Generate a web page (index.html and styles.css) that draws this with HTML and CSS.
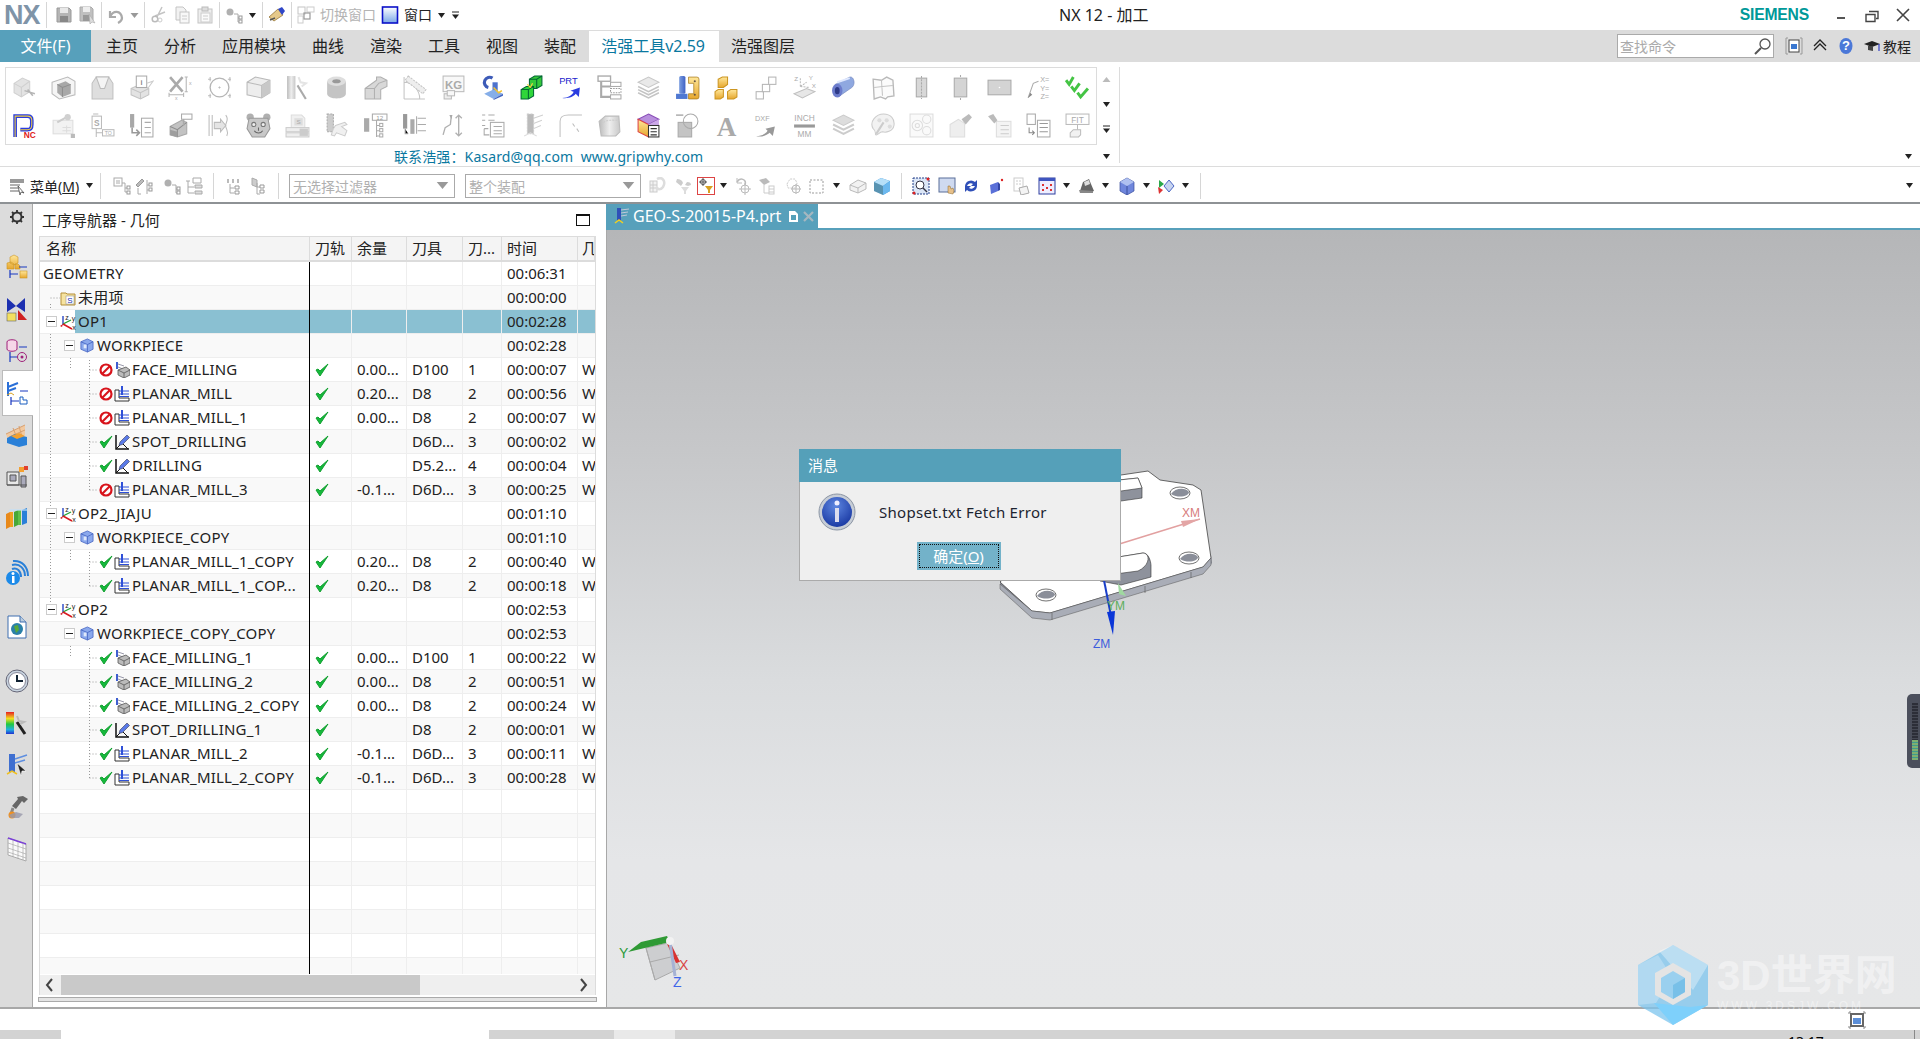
FILE: index.html
```html
<!DOCTYPE html>
<html lang="zh">
<head>
<meta charset="utf-8">
<title>NX 12 - 加工</title>
<link rel="stylesheet" href="styles.css">
</head>
<body>
<svg class="defs" xmlns="http://www.w3.org/2000/svg">
<defs>
<linearGradient id="gb" x1="0" y1="0" x2="1" y2="0"><stop offset="0" stop-color="#7d9fe0"/><stop offset="1" stop-color="#3f61c4"/></linearGradient>
<linearGradient id="gy" x1="0" y1="0" x2="0" y2="1"><stop offset="0" stop-color="#ffe79a"/><stop offset="1" stop-color="#e6a72e"/></linearGradient>
<linearGradient id="gr" x1="0" y1="0" x2="1" y2="0"><stop offset="0" stop-color="#bbb"/><stop offset=".5" stop-color="#eee"/><stop offset="1" stop-color="#c8c8c8"/></linearGradient>
<radialGradient id="gi" cx=".45" cy=".3" r=".8"><stop offset="0" stop-color="#5d86e0"/><stop offset="1" stop-color="#12309c"/></radialGradient>
<linearGradient id="gh" x1="0" y1="0" x2="0" y2="1"><stop offset="0" stop-color="#fff"/><stop offset="1" stop-color="#7aa7e8"/></linearGradient>
<linearGradient id="sp" x1="0" y1="0" x2="0" y2="1"><stop offset="0" stop-color="#e82020"/><stop offset=".3" stop-color="#f0e020"/><stop offset=".55" stop-color="#20c840"/><stop offset=".8" stop-color="#20b0e0"/><stop offset="1" stop-color="#2030d0"/></linearGradient>
</defs>

<symbol id="a1" viewBox="0 0 24 24"><path d="M2 8l8-5 7 3v10l-8 5-7-4z" fill="#e3e3e3" stroke="#d0d0d0"/><path d="M2 8l7 4 8-6M9 12v9" fill="none" stroke="#d0d0d0"/><path d="M12 15l10 3M15 14l5 6" stroke="#b5b5b5" stroke-width="1.5"/></symbol>
<symbol id="a2" viewBox="0 0 24 24"><path d="M1 7l15-5 7 4v13L8 23l-7-5z" fill="#f5f5f5" stroke="#bbb"/><path d="M6 9l8-3 5 3v9l-8 3-5-4z" fill="#a8a8a8"/><path d="M6 9l5 3 8-3M11 12v9" fill="none" stroke="#8e8e8e"/></symbol>
<symbol id="a3" viewBox="0 0 24 24"><path d="M2 8l4-6h12l4 6v15H2z" fill="#dedede" stroke="#c0c0c0"/><path d="M6 2l4 11h4l4-11z" fill="#f4f4f4" stroke="#bbb"/></symbol>
<symbol id="a4" viewBox="0 0 24 24"><path d="M2 13l9-4 8 4v6l-8 4-9-4z" fill="#e3e3e3" stroke="#c4c4c4"/><path d="M2 13l9 4 8-4M11 17v6" fill="none" stroke="#c4c4c4"/><rect x="7" y="1" width="10" height="11" fill="#fff" stroke="#aaa"/><text x="12" y="10" class="st b" fill="#888">i</text><path d="M17 8l6-2-5 7" fill="none" stroke="#ccc"/></symbol>
<symbol id="a5" viewBox="0 0 24 24"><path d="M2 2l12 14M14 2L2 16" stroke="#aaa" stroke-width="2.500"/><path d="M1 19h14M16 2h3M16 16h3M17.500 2v14M1 17v4M15 17v4" stroke="#b5b5b5"/><text x="21.500" y="10" class="st s5" fill="#aaa">x</text><text x="8" y="24" class="st s5" fill="#aaa">x</text></symbol>
<symbol id="a6" viewBox="0 0 24 24"><circle cx="12" cy="12" r="9" fill="#fff" stroke="#b5b5b5" stroke-width="1.3"/><path d="M12 11v2M11 12h2M1 4h3M3 2v4M20 4h3M22 2v4M1 20h3M3 18v4M20 20h3M22 18v4" stroke="#bbb"/></symbol>
<symbol id="a7" viewBox="0 0 24 24"><path d="M1 7l8-5 14 3v12l-8 5L1 19z" fill="#ededed" stroke="#b9b9b9"/><path d="M1 7l14 3 8-5M15 10v12" fill="none" stroke="#b9b9b9"/><path d="M15 10l8-5v12l-8 5z" fill="#c8c8c8"/></symbol>
<symbol id="a8" viewBox="0 0 24 24"><rect x="2" y="1" width="8" height="22" fill="url(#gr)"/><path d="M12 10l8 13" stroke="#aaa" stroke-width="2"/><path d="M13 2l2 5 5 1-4 3" fill="none" stroke="#e4e4e4" stroke-width="2"/></symbol>
<symbol id="a9" viewBox="0 0 24 24"><path d="M3 6v12c0 6 18 6 18 0V6" fill="#c4c4c4"/><ellipse cx="12" cy="6" rx="9" ry="4.5" fill="#dedede"/><ellipse cx="12" cy="6" rx="4" ry="2" fill="#999"/></symbol>
<symbol id="a10" viewBox="0 0 24 24"><path d="M2 13L13 5V2h4l6 3v6l-6 3v9H2z" fill="#d8d8d8" stroke="#b0b0b0"/><path d="M2 13h9l4-5 8-3M11 13v10" fill="none" stroke="#b0b0b0"/></symbol>
<symbol id="a11" viewBox="0 0 24 24"><path d="M2 23h20M2 2v21M2 7c8 0 15 7 15 16" fill="none" stroke="#c4c4c4"/><path d="M6 1l17 13-3 4L3 5z" fill="#eee" stroke="#c4c4c4" stroke-dasharray="2 1"/></symbol>
<symbol id="a12" viewBox="0 0 24 24"><rect x="2" y="1" width="20" height="15" fill="#f8f8f8" stroke="#bbb"/><text x="12" y="13" class="st b s12" fill="#aaa">KG</text><rect x="3" y="18" width="7" height="5" fill="#eee" stroke="#bbb"/><rect x="6" y="15" width="7" height="5" fill="#f8f8f8" stroke="#bbb"/></symbol>
<symbol id="a13" viewBox="0 0 24 24"><path d="M12 3a5 5 0 1 0-4 9" fill="none" stroke="#3d5bb8" stroke-width="3"/><rect x="12" y="7" width="5" height="10" fill="#4d72cc"/><path d="M4 18l9-4 9 4-9 5z" fill="#86aee8"/><path d="M13 23l9-5v2l-9 4z" fill="#3f62bf"/><path d="M13 12l5 5 3-2" fill="none" stroke="#f4c430" stroke-width="1.5"/></symbol>
<symbol id="a14" viewBox="0 0 24 24"><path d="M10 4l5-3h7v9l-5 3h-7z" fill="#34c83a" stroke="#063"/><path d="M2 14l5-3h7v9l-5 3H2z" fill="#2fd63a" stroke="#063"/><path d="M9 14v9M2 14h7l5-3M17 4v9M10 4h7l5-3" fill="none" stroke="#063"/><path d="M8 9l3 3M13 8l-2 4" stroke="#f4d03f" stroke-width="1.2"/></symbol>
<symbol id="a15" viewBox="0 0 24 24"><text x="10" y="9" class="st s9 n" fill="#2222cc">PRT</text><path d="M4 22c6 0 10-3 11-6l-3-1 9-3-1 9-3-3c-2 3-8 5-13 4z" fill="#2a3ce0"/></symbol>
<symbol id="a16" viewBox="0 0 24 24"><rect x="1" y="1" width="12" height="5" fill="#fff" stroke="#aaa" stroke-width="1.3"/><path d="M4 6v16M4 11h9M4 21h9" stroke="#aaa" stroke-width="2"/><rect x="13" y="7" width="10" height="4" fill="#fff" stroke="#aaa"/><rect x="13" y="13" width="10" height="4" fill="#fff" stroke="#999" stroke-dasharray="1.5 1"/><rect x="13" y="19" width="10" height="4" fill="#fff" stroke="#aaa"/></symbol>
<symbol id="a17" viewBox="0 0 24 24"><path d="M2 7l10-5 10 5-10 5z" fill="#e9e9e9" stroke="#c8c8c8"/><path d="M2 11l10 5 10-5M2 14l10 5 10-5M2 17l10 5 10-5" fill="none" stroke="#c4c4c4" stroke-width="1.5"/></symbol>
<symbol id="a18" viewBox="0 0 24 24"><rect x="4" y="1" width="6" height="17" rx="1.5" fill="url(#gb)"/><path d="M1 18h11v5H1z" fill="#4f78d2"/><path d="M13 2h8a2 2 0 0 1 2 2v17a2 2 0 0 1-2 2h-8v-5h5V8h-5z" fill="url(#gy)" stroke="#a5781a" stroke-width=".7"/><circle cx="19" cy="6" r="1" fill="#654"/><circle cx="19" cy="19" r="1" fill="#654"/></symbol>
<symbol id="a19" viewBox="0 0 24 24"><path d="M4 4l4-2h5v7l-4 3H4z" fill="url(#gy)" stroke="#cc9622"/><path d="M1 16l3-2h5v7l-3 2H1zM13 16l3-2h6v7l-3 2h-6z" fill="url(#gy)" stroke="#cc9622"/></symbol>
<symbol id="a20" viewBox="0 0 24 24"><rect x="3" y="16" width="7" height="7" fill="#fff" stroke="#b5b5b5"/><rect x="9" y="9" width="7" height="7" fill="#fff" stroke="#b5b5b5"/><rect x="15" y="2" width="7" height="7" fill="#fff" stroke="#b5b5b5"/></symbol>
<symbol id="a21" viewBox="0 0 24 24"><path d="M2 18l12-5 8 3-12 6z" fill="#e7e7e7" stroke="#c0c0c0"/><path d="M8 3v9M8 11l6-4M8 11l9 1" stroke="#bbb" stroke-dasharray="2 1"/><text x="4" y="6" class="st s6" fill="#aaa">Z</text><text x="18" y="5" class="st s6" fill="#aaa">Y</text><text x="21" y="12" class="st s6" fill="#aaa">X</text></symbol>
<symbol id="a22" viewBox="0 0 24 24"><path d="M4 9L18 2c4-1 6 7 2 10L7 21z" fill="#8fa8e0" stroke="#7788bb" stroke-width=".6"/><ellipse cx="6" cy="15" rx="5" ry="6.5" fill="#6c7ccc"/><ellipse cx="6" cy="15" rx="2.3" ry="3.4" fill="#2e3a88"/><path d="M6 7L18 3" stroke="#dfe8ff" stroke-width="2"/></symbol>
<symbol id="a23" viewBox="0 0 24 24"><path d="M3 4l8 1 5-3 6 3 1 15-6 1-2 2-5-2-6 2z" fill="#fbfbfb" stroke="#b9b9b9" stroke-width="1.3"/><path d="M11 5l1 15M4 12l8-1 10-1" fill="none" stroke="#c4c4c4"/></symbol>
<symbol id="a24" viewBox="0 0 24 24"><rect x="7" y="3" width="10" height="18" fill="#d8d8d8" stroke="#aaa"/><path d="M12 1v22" stroke="#aaa" stroke-dasharray="2 1"/></symbol>
<symbol id="a25" viewBox="0 0 24 24"><rect x="6" y="3" width="12" height="18" fill="#d4d4d4" stroke="#aaa"/><path d="M12 0v2M12 22v2" stroke="#aaa"/></symbol>
<symbol id="a26" viewBox="0 0 24 24"><rect x="1" y="5" width="22" height="14" fill="#d4d4d4" stroke="#aaa"/><circle cx="12" cy="12" r=".8" fill="#fff"/></symbol>
<symbol id="a27" viewBox="0 0 24 24"><path d="M2 22l5-14 5-2" fill="none" stroke="#aaa"/><path d="M2 22l2-5 2 2z" fill="#888"/><text x="18" y="7" class="st s7" fill="#aaa">X=</text><text x="18" y="15" class="st s7" fill="#aaa">Y=</text><text x="18" y="23" class="st s7" fill="#aaa">Z=</text></symbol>
<symbol id="a28" viewBox="0 0 24 24"><path d="M1 5l3 4 4-7M6 11l3 4 5-7M12 17l3 4 7-8" fill="none" stroke="#44c444" stroke-width="2.800"/></symbol>

<symbol id="b1" viewBox="0 0 24 24"><path d="M3 23V3h12c3 0 4 2 4 4v4c0 3-1 5-4 5H8" fill="none" stroke="#2a3ce0" stroke-width="3.500"/><path d="M3 23V3h12c3 0 4 2 4 4v4c0 3-1 5-4 5H8" fill="none" stroke="#f0d040" stroke-width="1"/><text x="17" y="24" class="st b s8" fill="#e02020">NC</text></symbol>
<symbol id="b2" viewBox="0 0 24 24"><rect x="2" y="7" width="19" height="13" fill="#f2f2f2" stroke="#ddd"/><path d="M6 9l9-5" stroke="#ccc" stroke-width="2"/><circle cx="16" cy="4" r="3" fill="#d0d0d0"/><path d="M11 14h8M11 17h8M15 12v7" stroke="#ddd"/><rect x="19" y="20" width="4" height="4" fill="#bbb"/></symbol>
<symbol id="b3" viewBox="0 0 24 24"><rect x="2" y="3" width="9" height="12" fill="#fff" stroke="#bbb"/><text x="6.500" y="12" class="st s8 b" fill="#aaa">S</text><path d="M3 1h5M6 15v8M6 19h6" stroke="#bbb"/><rect x="12" y="16" width="11" height="6" fill="#fff" stroke="#bbb"/><text x="17.500" y="21" class="st s5" fill="#aaa">TO</text></symbol>
<symbol id="b4" viewBox="0 0 24 24"><rect x="1" y="1" width="4" height="13" fill="#a8a8a8"/><path d="M3 14v5h6M7 16l3 3-3 3" fill="none" stroke="#999" stroke-width="1.5"/><rect x="12" y="5" width="11" height="18" fill="#fff" stroke="#aaa"/><path d="M15 9h6M15 14h6M15 19h6" stroke="#aaa"/></symbol>
<symbol id="b5" viewBox="0 0 24 24"><path d="M2 13l11-6 5 2v11l-9 3-7-2z" fill="#c2c2c2" stroke="#a8a8a8"/><path d="M2 13l7 3 9-7M9 16v7" fill="none" stroke="#8d8d8d"/><path d="M2 16l7 2v5l-7-2z" fill="#9e9e9e"/><rect x="13" y="1" width="10" height="5" fill="#fff" stroke="#aaa"/><path d="M15 6v6" stroke="#aaa" stroke-width="1.5"/></symbol>
<symbol id="b6" viewBox="0 0 24 24"><path d="M2 2v20M5 2v20" stroke="#bbb"/><path d="M7 9h6V6l5 6-5 6v-3H7z" fill="#e4e4e4" stroke="#bbb"/><path d="M18 2c4 5-1 7 0 11s3 5 1 9" fill="none" stroke="#bbb"/></symbol>
<symbol id="b7" viewBox="0 0 24 24"><circle cx="4" cy="4" r="3.500" fill="#b0b0b0"/><circle cx="20" cy="4" r="3.500" fill="#b0b0b0"/><path d="M3 5h18l2 10-5 8H6l-5-8z" fill="#c8c8c8" stroke="#999"/><circle cx="7.500" cy="11" r="2" fill="#eee" stroke="#777"/><circle cx="16.500" cy="11" r="2" fill="#eee" stroke="#777"/><path d="M8 17c2 3 6 3 8 0M12 14v3" fill="none" stroke="#666"/></symbol>
<symbol id="b8" viewBox="0 0 24 24"><path d="M6 2h10l3 3v9H6z" fill="#f0f0f0" stroke="#ddd"/><rect x="9" y="5" width="8" height="7" fill="#ddd"/><text x="13" y="11" class="st s6" fill="#aaa">S</text><rect x="1" y="14" width="22" height="4" fill="#eee" stroke="#ccc"/><rect x="1" y="19" width="22" height="4" fill="#eee" stroke="#ccc"/><rect x="14" y="15" width="8" height="7" fill="#ccc"/></symbol>
<symbol id="b9" viewBox="0 0 24 24"><rect x="3" y="1" width="6" height="17" fill="#ccc" stroke="#aaa" stroke-dasharray="2 1"/><path d="M11 12l9-3 2 2-5 2 5 4-2 5-8-3-2 3-3-1 2-6z" fill="#f0f0f0" stroke="#ccc"/></symbol>
<symbol id="b10" viewBox="0 0 24 24"><rect x="1" y="5" width="5" height="13" fill="#aaa"/><rect x="9" y="1" width="14" height="6" fill="#fff" stroke="#aaa"/><text x="16" y="6.500" class="st s6" fill="#999">12</text><path d="M13 7v16M13 12h3M13 17h3M13 22h3" stroke="#aaa"/><rect x="16" y="10" width="3" height="3" fill="#fff" stroke="#aaa"/><rect x="16" y="15" width="3" height="3" fill="#fff" stroke="#aaa"/><rect x="16" y="20" width="3" height="3" fill="#fff" stroke="#aaa"/></symbol>
<symbol id="b11" viewBox="0 0 24 24"><rect x="1" y="1" width="4" height="14" fill="#999"/><rect x="8" y="6" width="4" height="14" fill="#aaa"/><path d="M3 15v5h3M15 5h8M15 11h8M15 17h8M14 3v17" stroke="#aaa"/></symbol>
<symbol id="b12" viewBox="0 0 24 24"><path d="M17 2v20M14 5l3-3 3 3M14 19l3 3 3-3M10 2l-1 9-5 3-2 7" fill="none" stroke="#b0b0b0" stroke-width="1.3"/><path d="M8 2l3 0-1 4z" fill="#aaa"/></symbol>
<symbol id="b13" viewBox="0 0 24 24"><path d="M2 2h3M2 7h3M2 12h3M8 2h6M8 7h6" stroke="#aaa"/><path d="M4 15h4M4 15v6h5" fill="none" stroke="#aaa"/><rect x="10" y="9" width="13" height="14" fill="#fff" stroke="#aaa"/><path d="M13 13h8M13 17h8M13 20h8" stroke="#aaa"/></symbol>
<symbol id="b14" viewBox="0 0 24 24"><path d="M8 1h6v19H8z" fill="#bbb" stroke="#ccc" stroke-dasharray="2 1"/><path d="M14 5l9-3M14 10l8-3M14 15l7-3" stroke="#d0d0d0"/><path d="M5 22l6-3 6 3" fill="none" stroke="#ddd"/></symbol>
<symbol id="b15" viewBox="0 0 24 24"><path d="M2 23V8c0-5 3-6 8-6h13" fill="none" stroke="#c0c0c0"/><path d="M14 10l2 3M18 15l2 3" stroke="#bbb"/></symbol>
<symbol id="b16" viewBox="0 0 24 24"><path d="M2 8l6-5h13l1 15-4 4H4z" fill="url(#gr)" stroke="#bbb"/><path d="M6 9c5-3 10-2 15-2" fill="none" stroke="#ccc" stroke-dasharray="2 1"/></symbol>
<symbol id="b17" viewBox="0 0 24 24"><path d="M12 1l10 5-10 5L2 6z" fill="#b88fdd" stroke="#8a4fb8"/><path d="M2 6l10 5v12L2 18z" fill="url(#gy)" stroke="#d44"/><path d="M12 11l10-5v6h-10z" fill="#cba8e8"/><rect x="12" y="12" width="10" height="11" fill="#fff" stroke="#333"/><path d="M14 15h6M14 18h6M14 21h6" stroke="#333"/></symbol>
<symbol id="b18" viewBox="0 0 24 24"><rect x="3" y="9" width="13" height="14" fill="#c4c4c4" stroke="#aaa"/><circle cx="15" cy="8" r="7" fill="none" stroke="#aaa"/><path d="M1 2h7" stroke="#888"/></symbol>
<symbol id="b19" viewBox="0 0 24 24"><text x="12" y="22" class="st sa" fill="#aaa">A</text></symbol>
<symbol id="b20" viewBox="0 0 24 24"><text x="9" y="8" class="st s7" fill="#aaa">DXF</text><path d="M3 22c6 0 9-2 11-5l-2-2 9-2-2 9-3-3c-2 2-8 5-13 3z" fill="#999"/></symbol>
<symbol id="b21" viewBox="0 0 24 24"><text x="12" y="8" class="st s8" fill="#aaa">INCH</text><path d="M2 11h20v3H2z" fill="#999"/><text x="12" y="23" class="st s8" fill="#aaa">MM</text></symbol>
<symbol id="b22" viewBox="0 0 24 24"><path d="M2 7l10-5 10 5-10 5z" fill="#ddd" stroke="#ccc"/><path d="M2 11l10 5 10-5M2 15l10 5 10-5" fill="none" stroke="#ccc" stroke-width="2"/></symbol>
<symbol id="b23" viewBox="0 0 24 24"><path d="M3 15C-1 8 6 1 13 1c7 0 11 5 10 11-1 6-8 7-11 6-3 0-4 3-6 3s1-3-3-6z" fill="#f2f2f2" stroke="#ccc"/><circle cx="9" cy="7" r="2" fill="#ddd"/><circle cx="16" cy="7" r="2" fill="#ddd"/><circle cx="19" cy="13" r="2" fill="#ddd"/><path d="M6 20l7-11" stroke="#ccc" stroke-width="2"/></symbol>
<symbol id="b24" viewBox="0 0 24 24"><rect x="1" y="1" width="22" height="22" fill="#fafafa" stroke="#ddd"/><circle cx="8" cy="12" r="5" fill="none" stroke="#ddd"/><circle cx="8" cy="12" r="2" fill="none" stroke="#ddd"/><circle cx="17" cy="6" r="4" fill="none" stroke="#ddd"/><circle cx="17" cy="17" r="4" fill="none" stroke="#ddd"/></symbol>
<symbol id="b25" viewBox="0 0 24 24"><path d="M2 11l8-5 6 4v13H2z" fill="#eee" stroke="#ddd"/><path d="M13 6l7-5 3 3-6 7z" fill="#bbb"/></symbol>
<symbol id="b26" viewBox="0 0 24 24"><rect x="9" y="8" width="14" height="15" fill="#f4f4f4" stroke="#ddd"/><path d="M13 12h8M13 16h8M13 20h8" stroke="#ccc"/><path d="M1 3l5-2 4 6-3 3z" fill="#bbb"/></symbol>
<symbol id="b27" viewBox="0 0 24 24"><rect x="1" y="1" width="8" height="10" fill="#fff" stroke="#aaa"/><path d="M3 14v5h5M6 17l2 2-2 2" fill="none" stroke="#888"/><rect x="11" y="7" width="12" height="16" fill="#fff" stroke="#aaa"/><path d="M13 10h8M13 14h8M13 18h8" stroke="#999"/></symbol>
<symbol id="b28" viewBox="0 0 24 24"><rect x="1" y="1" width="22" height="10" fill="#fff" stroke="#bbb"/><text x="12" y="9.500" class="st s8" fill="#aaa">FIT</text><path d="M12 11v5" stroke="#bbb"/><path d="M5 19l3-3h7v5l-2 2H5z" fill="#f2f2f2" stroke="#bbb"/></symbol>

<symbol id="caret" viewBox="0 0 9 9"><path d="M1 2h7L4.500 7z" fill="#222"/></symbol>
<symbol id="carets" viewBox="0 0 9 9"><path d="M1 1h7" stroke="#222"/><path d="M1 3.500h7L4.500 8z" fill="#222"/></symbol>
<symbol id="caretg" viewBox="0 0 9 9"><path d="M.5 2h8L4.500 7z" fill="#999"/></symbol>
<symbol id="up" viewBox="0 0 9 9"><path d="M.5 7h8L4.500 2z" fill="#bbb"/></symbol>

<symbol id="q1" viewBox="0 0 18 18"><path d="M2 2h12l2 2v12H2z" fill="#b5b5b5" stroke="#999"/><rect x="5" y="2" width="8" height="5" fill="#e8e8e8"/><rect x="5" y="10" width="8" height="6" fill="#888"/></symbol>
<symbol id="q2" viewBox="0 0 18 18"><path d="M2 1h11l2 2v12H2z" fill="#c0c0c0" stroke="#aaa"/><rect x="5" y="1" width="7" height="5" fill="#eee"/><rect x="5" y="9" width="7" height="6" fill="#999"/><path d="M11 8l6 9-3-1-2 2z" fill="#ddd" stroke="#aaa" stroke-width=".6"/></symbol>
<symbol id="q3" viewBox="0 0 18 18"><path d="M3 5v6h6M3 11c3-7 11-7 12 1 0 3-2 4-4 5" fill="none" stroke="#aaa" stroke-width="2.2"/></symbol>
<symbol id="q4" viewBox="0 0 18 18"><path d="M12 1L7 11M15 6L5 10" stroke="#c4c4c4" stroke-width="1.5"/><circle cx="5" cy="13" r="2.800" fill="none" stroke="#bbb" stroke-width="1.500"/><circle cx="10" cy="14" r="2" fill="none" stroke="#ccc"/></symbol>
<symbol id="q5" viewBox="0 0 18 18"><path d="M3 1h7l3 3v10H3z" fill="#f2f2f2" stroke="#c4c4c4"/><rect x="7" y="6" width="9" height="11" fill="#f8f8f8" stroke="#c4c4c4"/><path d="M9 10h5M9 13h5" stroke="#ccc"/></symbol>
<symbol id="q6" viewBox="0 0 18 18"><rect x="2" y="3" width="14" height="14" fill="#eee" stroke="#c4c4c4"/><rect x="6" y="1" width="6" height="4" fill="#ddd" stroke="#bbb"/><rect x="5" y="7" width="9" height="9" fill="#fafafa" stroke="#ccc"/><path d="M7 10h5M7 13h5" stroke="#ccc"/></symbol>
<symbol id="q7" viewBox="0 0 18 18"><circle cx="5" cy="6" r="3.500" fill="#b0b0b0"/><path d="M9 8h4v8h3M13 12h3" fill="none" stroke="#aaa"/><rect x="14" y="10" width="3" height="3" fill="#fff" stroke="#999"/><rect x="14" y="14" width="3" height="3" fill="#fff" stroke="#999"/></symbol>
<symbol id="q8" viewBox="0 0 18 18"><path d="M1 11l9-8 5 6-9 6z" fill="#e6c98a" stroke="#8c6a2a" stroke-width=".7"/><path d="M10 3l4-2 3 4-3 4z" fill="#2f46c8"/><path d="M2 14l5-2" stroke="#555" stroke-width="1.500"/></symbol>
<symbol id="q9" viewBox="0 0 18 18"><rect x="1" y="1" width="7" height="7" fill="#fff" stroke="#c4c4c4"/><rect x="10" y="1" width="7" height="5" fill="#fff" stroke="#ccc"/><rect x="1" y="10" width="5" height="7" fill="#fff" stroke="#ccc"/><rect x="7" y="7" width="6" height="6" fill="none" stroke="#999" stroke-width="1.200"/></symbol>
<symbol id="q10" viewBox="0 0 18 18"><rect x="1.500" y="1" width="15" height="16" fill="url(#gh)" stroke="#0a10c8" stroke-width="1.600"/></symbol>

<symbol id="t1" viewBox="0 0 18 18"><rect x="2" y="2" width="14" height="4" fill="#9a9a9a"/><path d="M2 8h10M2 11h8M2 14h10" stroke="#666"/><path d="M10 9l6 7-3-1-1 3z" fill="#fff" stroke="#333" stroke-width=".7"/></symbol>
<symbol id="t2" viewBox="0 0 18 18"><rect x="1" y="1" width="8" height="8" fill="#fff" stroke="#aaa"/><path d="M3 4h4M3 6h4M9 6h3v9h2M12 11h2" fill="none" stroke="#aaa"/><rect x="14" y="9" width="3" height="3" fill="#fff" stroke="#999"/><rect x="14" y="14" width="3" height="3" fill="#fff" stroke="#999"/></symbol>
<symbol id="t3" viewBox="0 0 18 18"><path d="M1 8l6-6 2 2-6 6z" fill="#bbb" stroke="#999"/><path d="M3 11v6h3M12 3v14M12 8h3M12 13h3" fill="none" stroke="#aaa"/><rect x="14" y="6" width="3" height="3" fill="#fff" stroke="#999"/><rect x="14" y="11" width="3" height="3" fill="#fff" stroke="#999"/></symbol>
<symbol id="t4" viewBox="0 0 18 18"><path d="M8 1h8v5H8z" fill="none" stroke="#aaa"/><path d="M1 4h4M3 4v12h6M3 10h6" fill="none" stroke="#aaa"/><path d="M10 8h7v3h-7zM10 14h7v3h-7z" fill="#ddd" stroke="#aaa"/></symbol>
<symbol id="t5" viewBox="0 0 18 18"><path d="M1 2v4h2V2zM6 2v4h2V2zM11 2v4h2V2z" fill="#bbb"/><path d="M4 7v9h4M4 11h4" fill="none" stroke="#aaa"/><path d="M9 9h4v3H9zM9 14h4v3H9z" fill="#fff" stroke="#999"/></symbol>
<symbol id="t6" viewBox="0 0 18 18"><path d="M4 1l5 2v7l-5-2z" fill="#ccc" stroke="#aaa"/><path d="M9 6v11h3M9 10h3" fill="none" stroke="#aaa"/><path d="M12 8h4v3h-4zM12 13h4v3h-4z" fill="#fff" stroke="#999"/></symbol>
<symbol id="t7" viewBox="0 0 18 18"><rect x="1" y="4" width="7" height="11" fill="#f2f2f2" stroke="#ccc"/><path d="M1 8h7M1 11h7M4 4v11" stroke="#ccc"/><path d="M8 2c6-3 9 3 6 8-2 3-6 3-6 0" fill="none" stroke="#ddd" stroke-width="2.500"/></symbol>
<symbol id="t8" viewBox="0 0 18 18"><path d="M2 2c3 0 5 1 6 4l-2 3-5-4zM12 5c3 0 4 1 4 3l-3 1-3-1z" fill="#ccc"/><path d="M6 10h8l-3 4v3H9v-3z" fill="#ddd"/></symbol>
<symbol id="t9" viewBox="0 0 18 18"><rect x=".5" y=".5" width="17" height="17" fill="#fff" stroke="#d44"/><path d="M6 1v8M2 5h8" stroke="#555"/><circle cx="6" cy="5" r="2.500" fill="none" stroke="#555"/><path d="M8 9h8l-3 4v3h-2v-3z" fill="#d8a020"/></symbol>
<symbol id="t10" viewBox="0 0 18 18"><path d="M3 5c3-5 10-3 8 3" fill="none" stroke="#bbb" stroke-width="1.500"/><path d="M3 1v5h5" fill="none" stroke="#bbb"/><circle cx="11" cy="12" r="4" fill="none" stroke="#bbb"/><path d="M11 6v12M5 12h12" stroke="#bbb"/></symbol>
<symbol id="t11" viewBox="0 0 18 18"><path d="M1 3l7-2 4 4-6 3z" fill="#bbb"/><rect x="11" y="9" width="5" height="8" fill="#fff" stroke="#ccc"/><path d="M11 12h5M11 15h5M6 8v8h5" fill="none" stroke="#ccc"/></symbol>
<symbol id="t12" viewBox="0 0 18 18"><path d="M3 7l3-5h5l2 4-1 5H4z" fill="none" stroke="#ccc" stroke-dasharray="2 1"/><circle cx="12" cy="12" r="4" fill="none" stroke="#bbb"/><path d="M12 7v10M7 12h10" stroke="#bbb"/></symbol>
<symbol id="t13" viewBox="0 0 18 18"><rect x="2" y="3" width="13" height="13" fill="none" stroke="#999" stroke-dasharray="2 1.500"/></symbol>
<symbol id="t14" viewBox="0 0 18 18"><path d="M1 8l8-5 8 3v6l-8 4-8-3z" fill="#f2f2f2" stroke="#bbb"/><path d="M1 8l8 3 8-5M9 11v5" fill="none" stroke="#bbb"/></symbol>
<symbol id="t15" viewBox="0 0 18 18"><path d="M1 5l7-4 9 3v10l-7 4-9-4z" fill="#2e8fd8"/><path d="M1 5l9 4 7-5-9-3z" fill="#b6dff8"/><path d="M10 9v9l7-4V4z" fill="#6cb8ee"/><path d="M1 5v9l9 4V9z" fill="#d8a040" opacity=".25"/></symbol>
<symbol id="t16" viewBox="0 0 18 18"><rect x="1" y="1" width="16" height="16" fill="#dbe6f7" stroke="#223f88" stroke-dasharray="2 1"/><circle cx="8" cy="8" r="4" fill="#fff" stroke="#334"/><path d="M11 11l4 4" stroke="#334" stroke-width="1.500"/><circle cx="2" cy="16" r="1.500" fill="#d22"/><circle cx="16" cy="2" r="1.500" fill="#d22"/></symbol>
<symbol id="t17" viewBox="0 0 18 18"><rect x="1" y="1" width="16" height="14" fill="#cfdaf0" stroke="#5a6f99"/><path d="M10 16V9l2 0 1 3 2-1 1 3-1 3z" fill="#e7c08a" stroke="#8c6a2a" stroke-width=".5"/></symbol>
<symbol id="t18" viewBox="0 0 18 18"><path d="M3 9a6 6 0 0 1 10-4l2-2v6h-6l2-2a4 4 0 0 0-6 2M15 9a6 6 0 0 1-10 4l-2 2V9h6l-2 2a4 4 0 0 0 6-2" fill="#2f4fb8"/></symbol>
<symbol id="t19" viewBox="0 0 18 18"><path d="M2 8l8-3v9l-7 3z" fill="#5a70d8"/><path d="M10 5l2 2v6l-2 1z" fill="#3245a5"/><circle cx="14" cy="3" r="1.200" fill="#d22"/></symbol>
<symbol id="t20" viewBox="0 0 18 18"><rect x="2" y="1" width="9" height="13" fill="#fff" stroke="#ccc"/><path d="M4 4h2M7 4h2M4 7h2M7 7h2" stroke="#ccc"/><path d="M7 11l8-2 2 7-8 2z" fill="#f4f4f4" stroke="#aaa"/></symbol>
<symbol id="t21" viewBox="0 0 18 18"><rect x="1" y="1" width="16" height="16" fill="#eef" stroke="#2f3f9f"/><rect x="1" y="1" width="16" height="3" fill="#3f55bf"/><path d="M4 7h2v2H4zM12 7h2v2h-2zM4 12h2v2H4zM12 12h2v2h-2z" fill="#d33"/><path d="M8 10h2v2H8z" fill="#d33"/></symbol>
<symbol id="t22" viewBox="0 0 18 18"><path d="M3 14l3-9 6-3 2 5 3 7-7 2z" fill="#666"/><path d="M7 5l5-2 1 4-5 2z" fill="#ddd"/><path d="M2 13l14 1v2H3z" fill="#888"/></symbol>
<symbol id="t23" viewBox="0 0 18 18"><path d="M2 5l7-4 7 4v9l-7 4-7-4z" fill="#6f86dc" stroke="#3a4e9c" stroke-width=".7"/><path d="M2 5l7 4 7-4-7-4z" fill="#afc0f0"/><path d="M9 9v9" stroke="#3a4e9c"/></symbol>
<symbol id="t24" viewBox="0 0 18 18"><path d="M2 3l5 4-5 4z" fill="#2aa84a"/><path d="M1 10l5 3-4 4z" fill="#d33"/><path d="M7 9l5-6 5 6-5 6z" fill="#c7d3ef" stroke="#4a66c4"/></symbol>

<symbol id="s0" viewBox="0 0 24 24"><circle cx="12" cy="12" r="4.500" fill="none" stroke="#333" stroke-width="2"/><path d="M12 5v3M12 16v3M5 12h3M16 12h3M7 7l2 2M15 15l2 2M17 7l-2 2M9 15l-2 2" stroke="#333" stroke-width="1.800"/></symbol>
<symbol id="s1" viewBox="0 0 24 24"><path d="M5 2l4-2 4 2v6l-4 2-4-2zM2 8l4-1 3 2v5H2zM10 9l3 0 2 2v3h-5z" fill="url(#gy)" stroke="#cc9622" stroke-width=".6"/><path d="M5 15v8M5 19h8M14 12h8" stroke="#1838c0" stroke-width="1.200"/><rect x="15" y="16" width="7" height="7" fill="url(#gy)" stroke="#cc9622" stroke-width=".6"/></symbol>
<symbol id="s2" viewBox="0 0 24 24"><path d="M2 1l9 8 9-8v14l-9-6-9 6z" fill="#1c2fb0"/><rect x="2" y="16" width="9" height="8" fill="#f4e060" stroke="#666" stroke-width=".6"/><path d="M13 13l9 10h-9z" fill="#d02020"/></symbol>
<symbol id="s3" viewBox="0 0 24 24"><path d="M2 3c0-3 10-3 10 0v7c0 3-10 3-10 0z" fill="#f6d6e8" stroke="#a0207a"/><path d="M14 8h8M5 13v10M5 18h7" stroke="#1838c0" stroke-width="1.200"/><circle cx="17" cy="18" r="4.500" fill="none" stroke="#a0207a"/><circle cx="17" cy="18" r="1.500" fill="#a0207a"/></symbol>
<symbol id="s4" viewBox="0 0 24 24"><path d="M2 1v14M2 6l10-4M2 10l8-3" stroke="#2a6fd8" stroke-width="2"/><path d="M1 14l4-2 3 2" stroke="#d8a020" fill="none"/><path d="M14 10h8M5 16v8M5 20h8" stroke="#1838c0" stroke-width="1.200"/><path d="M14 16h3v3h4v4h-7z" fill="#fff" stroke="#1a5fc0"/></symbol>
<symbol id="s5" viewBox="0 0 24 24"><path d="M1 11L20 2v10L4 20z" fill="#f2c9a0"/><path d="M1 11L20 2M4 14l16-7M8 5l4 10M14 3l3 11" stroke="#d8a070"/><path d="M2 15l8-4 12 3v8l-8 2-12-4z" fill="#2a80d8"/><path d="M6 13l6 3 8-3-6-3z" fill="#f2a030"/></symbol>
<symbol id="s6" viewBox="0 0 24 24"><path d="M2 7h12v13H2z" fill="#e8e8e8" stroke="#555"/><path d="M5 10h6v6H5zM16 11h5v11h-5z" fill="#aab" stroke="#555"/><rect x="14" y="2" width="5" height="5" fill="#f4a030"/><rect x="19" y="1" width="4" height="4" fill="#e04030"/><path d="M2 20h20" stroke="#555"/></symbol>
<symbol id="s7" viewBox="0 0 24 24"><path d="M1 7l4-2v15l-4 2z" fill="#e8891a"/><path d="M5 5h3v15H5z" fill="#f0a020"/><path d="M9 5l4-2v15l-4 2z" fill="#48a838"/><path d="M13 3h3v15h-3z" fill="#60c048"/><path d="M17 3l5-2v15l-5 2z" fill="#2a80d8"/><path d="M1 7l4-5h18l-1 2H5z" fill="#bfe0f8" opacity=".6"/></symbol>
<symbol id="s8" viewBox="0 0 24 24"><circle cx="8" cy="17" r="7" fill="#1c8ae8"/><rect x="7" y="15" width="2.500" height="7" fill="#fff"/><circle cx="8" cy="12.500" r="1.500" fill="#fff"/><path d="M7 8c5-2 9 2 9 8M7 4c8-2 13 4 13 11M8 0c9-1 15 6 15 15" fill="none" stroke="#2a80d8" stroke-width="2"/></symbol>
<symbol id="s9" viewBox="0 0 24 24"><path d="M3 1h12l6 6v16H3z" fill="#fff" stroke="#3f6fb0"/><path d="M15 1v6h6" fill="#bcd" stroke="#3f6fb0"/><circle cx="12" cy="14" r="6" fill="#2a80a8"/><path d="M9 11l4-1 1 5-3 3z" fill="#58a838"/></symbol>
<symbol id="s10" viewBox="0 0 24 24"><circle cx="12" cy="12" r="11" fill="#c8d4e0" stroke="#667"/><circle cx="12" cy="12" r="8.500" fill="#fff" stroke="#889"/><path d="M12 6v6h6" fill="none" stroke="#123" stroke-width="2"/></symbol>
<symbol id="s11" viewBox="0 0 24 24"><rect x="1" y="1" width="8" height="22" fill="url(#sp)"/><path d="M12 11l8 12" stroke="#222" stroke-width="3"/><path d="M12 5l2 5 5 1-4 2" fill="none" stroke="#bbb" stroke-width="2"/></symbol>
<symbol id="s12" viewBox="0 0 24 24"><path d="M4 1h6v18H4z" fill="#3f6fd0"/><path d="M10 6l12-4M10 10l10-3" stroke="#5f8fe0" stroke-width="1.500"/><path d="M2 21l5-3 5 3" stroke="#f0c020" fill="none" stroke-width="1.500"/><path d="M12 10l9 8-4 0-1 5z" fill="#222" stroke="#fff" stroke-width=".6"/></symbol>
<symbol id="s13" viewBox="0 0 24 24"><path d="M18 1l5 3-4 4-2-2-6 8-4-3 6-7-1-2z" fill="#666"/><path d="M8 13l-2 6" stroke="#888" stroke-width="3"/><circle cx="7" cy="20" r="3.500" fill="#f09020"/><path d="M4 20l7-3 7 2-4 4H6z" fill="#99a" opacity=".8"/></symbol>
<symbol id="s14" viewBox="0 0 24 24"><path d="M3 1l18 6v17L3 18z" fill="#fafafa" stroke="#aaa"/><path d="M3 1l18 6" stroke="#7a3fd8" stroke-width="1.500"/><path d="M3 6l18 6M3 11l18 6M3 15l18 6M8 3v17M13 5v17M18 6v17" stroke="#aaa" stroke-width=".7"/></symbol>

<symbol id="ban" viewBox="0 0 14 14"><circle cx="7" cy="7" r="5.500" fill="#fff" stroke="#d8141c" stroke-width="2.200"/><path d="M3 11L11 3" stroke="#d8141c" stroke-width="2.200"/></symbol>
<symbol id="ok" viewBox="0 0 14 14"><path d="M1 7l4 6 8-12-8 7-2-2z" fill="#15b93c" stroke="#12a030" stroke-width="1"/></symbol>
<symbol id="face" viewBox="0 0 16 16"><path d="M2 0h2v7H2z" fill="#3f5fd0"/><path d="M4 2l6 2M4 5l5 2" stroke="#99a"/><path d="M4 8l8-3 4 3v5l-6 3-6-3z" fill="#bbb" stroke="#555" stroke-width=".8"/><path d="M4 8l6 3 6-3M10 11v5" fill="none" stroke="#555" stroke-width=".8"/></symbol>
<symbol id="planar" viewBox="0 0 16 16"><path d="M1 4h4v8h10v3H1z" fill="#fff" stroke="#333"/><path d="M7 0h2v9H7z" fill="#2f50d8"/><path d="M5 5h10M5 8h10M5 10.500h10" stroke="#2f50d8"/></symbol>
<symbol id="drill" viewBox="0 0 16 16"><path d="M2 1v14h13" fill="none" stroke="#111" stroke-width="1.500"/><path d="M2 15l6-6 6 6" fill="none" stroke="#111"/><path d="M6 8l7-7 2.500 2.500-7 7-3.500 1z" fill="#5a7ae8" stroke="#223" stroke-width=".5"/></symbol>
<symbol id="axis" viewBox="0 0 16 16"><path d="M3 2v9" stroke="#1838c0" stroke-width="1.300"/><path d="M3 10l8-4" stroke="#22a032" stroke-width="1.300"/><path d="M3 10l9 5" stroke="#d81820" stroke-width="1.500"/><path d="M0 12l3-2-1 3z" fill="#d81820"/><text x="7" y="6" class="st s7" fill="#222">z</text><text x="13.500" y="7" class="st s7" fill="#222">y</text><text x="14" y="15.500" class="st s7" fill="#222">x</text></symbol>
<symbol id="wp" viewBox="0 0 16 16"><path d="M2 4l7-3 6 3v8l-6 3-7-3z" fill="#8aa8ec" stroke="#4060c0" stroke-width=".8"/><path d="M2 4l7 3 6-3M9 7v8" fill="none" stroke="#4060c0" stroke-width=".8"/><path d="M5 7h3v4H5z" fill="#dfe8fa"/></symbol>
<symbol id="folder" viewBox="0 0 16 16"><path d="M1 3h5l1 1h8v11H1z" fill="#f6e3a0" stroke="#b48f3a"/><rect x="6" y="6" width="8" height="8" fill="#fff" stroke="#888" stroke-width=".5"/><text x="10" y="13" class="st s8" fill="#2230b0">S</text></symbol>
</svg>

<div class="app">
  <header class="titlebar">
    <div class="qat">
      <span class="nx">NX</span><i class="sep"></i>
      <svg class="i18 first"><use href="#q1"/></svg><svg class="i18"><use href="#q2"/></svg><i class="sep"></i>
      <svg class="i18"><use href="#q3"/></svg><svg class="c9"><use href="#caretg"/></svg><i class="sep"></i>
      <svg class="i18"><use href="#q4"/></svg><svg class="i18"><use href="#q5"/></svg><svg class="i18"><use href="#q6"/></svg><i class="sep"></i>
      <svg class="i18"><use href="#q7"/></svg><svg class="c9"><use href="#caret"/></svg><i class="sep"></i>
      <svg class="i18"><use href="#q8"/></svg><i class="sep"></i>
      <svg class="i18"><use href="#q9"/></svg><span class="qtxt off">切换窗口</span>
      <svg class="i18"><use href="#q10"/></svg><span class="qtxt">窗口</span>
      <svg class="c9"><use href="#caret"/></svg><svg class="c9"><use href="#carets"/></svg>
    </div>
    <div class="apptitle">NX 12 - 加工</div>
    <div class="winctl">
      <span class="siemens">SIEMENS</span>
      <svg class="wbtn"><path d="M8 12h8v2H8z" fill="#555"/></svg>
      <svg class="wbtn"><path d="M9 6.500h9v7h-2M6 9.500h9v7H6z" fill="none" stroke="#444" stroke-width="1.400"/></svg>
      <svg class="wbtn last"><path d="M6 4l12 12M18 4L6 16" stroke="#444" stroke-width="1.600"/></svg>
    </div>
  </header>

  <nav class="tabs">
    <div class="tab file">文件(F)</div>
    <div class="tab home">主页</div><div class="tab">分析</div><div class="tab">应用模块</div><div class="tab">曲线</div><div class="tab">渲染</div><div class="tab">工具</div><div class="tab">视图</div><div class="tab">装配</div>
    <div class="tab active">浩强工具v2.59</div><div class="tab">浩强图层</div>
    <div class="tabs-right">
      <div class="search"><span>查找命令</span><svg class="mag"><circle cx="12" cy="7" r="5" fill="#fff" stroke="#555" stroke-width="1.300"/><path d="M8 11l-6 6" stroke="#555" stroke-width="2"/></svg></div>
      <svg class="i18"><path d="M3 1H1v16h2M15 1h2v16h-2" fill="none" stroke="#999"/><rect x="4" y="3" width="10" height="12" fill="#fff" stroke="#444"/><rect x="6" y="7" width="6" height="5" fill="#3a78d0"/></svg>
      <svg class="i18"><path d="M3 13l6-6 6 6M3 9l6-6 6 6" fill="none" stroke="#222" stroke-width="1.300"/></svg>
      <svg class="i18"><ellipse cx="9" cy="9" rx="6.500" ry="8" fill="#4b78d8"/><text x="9" y="13" class="st b s11" fill="#fff">?</text></svg>
      <span class="tut"><svg class="i18"><path d="M1 7l8-3 8 3-8 3z" fill="#222"/><path d="M5 9v4l5 1V9z" fill="#444"/><path d="M16 7v7" stroke="#1020c0"/></svg>教程</span>
    </div>
  </nav>

  <section class="ribbon">
    <div class="rib-top">
      <div class="gallery">
        <div class="ri"><svg><use href="#a1"/></svg></div><div class="ri"><svg><use href="#a2"/></svg></div><div class="ri"><svg><use href="#a3"/></svg></div><div class="ri"><svg><use href="#a4"/></svg></div><div class="ri"><svg><use href="#a5"/></svg></div><div class="ri"><svg><use href="#a6"/></svg></div><div class="ri"><svg><use href="#a7"/></svg></div>
        <div class="ri"><svg><use href="#a8"/></svg></div><div class="ri"><svg><use href="#a9"/></svg></div><div class="ri"><svg><use href="#a10"/></svg></div><div class="ri"><svg><use href="#a11"/></svg></div><div class="ri"><svg><use href="#a12"/></svg></div><div class="ri"><svg><use href="#a13"/></svg></div><div class="ri"><svg><use href="#a14"/></svg></div>
        <div class="ri"><svg><use href="#a15"/></svg></div><div class="ri"><svg><use href="#a16"/></svg></div><div class="ri"><svg><use href="#a17"/></svg></div><div class="ri"><svg><use href="#a18"/></svg></div><div class="ri"><svg><use href="#a19"/></svg></div><div class="ri"><svg><use href="#a20"/></svg></div><div class="ri"><svg><use href="#a21"/></svg></div>
        <div class="ri"><svg><use href="#a22"/></svg></div><div class="ri"><svg><use href="#a23"/></svg></div><div class="ri"><svg><use href="#a24"/></svg></div><div class="ri"><svg><use href="#a25"/></svg></div><div class="ri"><svg><use href="#a26"/></svg></div><div class="ri"><svg><use href="#a27"/></svg></div><div class="ri"><svg><use href="#a28"/></svg></div>
        <div class="ri"><svg><use href="#b1"/></svg></div><div class="ri"><svg><use href="#b2"/></svg></div><div class="ri"><svg><use href="#b3"/></svg></div><div class="ri"><svg><use href="#b4"/></svg></div><div class="ri"><svg><use href="#b5"/></svg></div><div class="ri"><svg><use href="#b6"/></svg></div><div class="ri"><svg><use href="#b7"/></svg></div>
        <div class="ri"><svg><use href="#b8"/></svg></div><div class="ri"><svg><use href="#b9"/></svg></div><div class="ri"><svg><use href="#b10"/></svg></div><div class="ri"><svg><use href="#b11"/></svg></div><div class="ri"><svg><use href="#b12"/></svg></div><div class="ri"><svg><use href="#b13"/></svg></div><div class="ri"><svg><use href="#b14"/></svg></div>
        <div class="ri"><svg><use href="#b15"/></svg></div><div class="ri"><svg><use href="#b16"/></svg></div><div class="ri"><svg><use href="#b17"/></svg></div><div class="ri"><svg><use href="#b18"/></svg></div><div class="ri"><svg><use href="#b19"/></svg></div><div class="ri"><svg><use href="#b20"/></svg></div><div class="ri"><svg><use href="#b21"/></svg></div>
        <div class="ri"><svg><use href="#b22"/></svg></div><div class="ri"><svg><use href="#b23"/></svg></div><div class="ri"><svg><use href="#b24"/></svg></div><div class="ri"><svg><use href="#b25"/></svg></div><div class="ri"><svg><use href="#b26"/></svg></div><div class="ri"><svg><use href="#b27"/></svg></div><div class="ri"><svg><use href="#b28"/></svg></div>
      </div>
      <div class="rib-scroll">
        <svg class="c9"><use href="#up"/></svg><svg class="c9"><use href="#caret"/></svg><svg class="c9"><use href="#carets"/></svg>
      </div>
    </div>
    <div class="contact"><span>联系浩强：Kasard@qq.com&nbsp; www.gripwhy.com</span><svg class="c9 mid-caret"><use href="#caret"/></svg><svg class="c9 end-caret"><use href="#caret"/></svg></div>
    <i class="rib-vline"></i>
  </section>

  <section class="toolbar">
    <svg class="i18"><use href="#t1"/></svg><span class="menu">菜单(<u>M</u>)</span><svg class="c9"><use href="#caret"/></svg><i class="sep m2"></i>
    <svg class="i18 m8"><use href="#t2"/></svg><svg class="i18"><use href="#t3"/></svg><svg class="i18 m6"><use href="#q7"/></svg><svg class="i18"><use href="#t4"/></svg><i class="sep m6"></i>
    <svg class="i18 m8"><use href="#t5"/></svg><svg class="i18"><use href="#t6"/></svg><i class="sep m8"></i>
    <div class="combo w1 m6"><span>无选择过滤器</span><svg class="c11"><use href="#caretg"/></svg></div>
    <div class="combo w2 m6"><span>整个装配</span><svg class="c11"><use href="#caretg"/></svg></div>
    <svg class="i18 m4"><use href="#t7"/></svg><svg class="i18 m4"><use href="#t8"/></svg><svg class="i18"><use href="#t9"/></svg><svg class="c9"><use href="#caret"/></svg>
    <svg class="i18 m2"><use href="#t10"/></svg><svg class="i18 m2"><use href="#t11"/></svg><svg class="i18 m4"><use href="#t12"/></svg><svg class="i18 m2"><use href="#t13"/></svg><svg class="c9 m2"><use href="#caret"/></svg>
    <svg class="i18 m4"><use href="#t14"/></svg><svg class="i18 m2"><use href="#t15"/></svg><i class="sep m6"></i>
    <svg class="i18 m6"><use href="#t16"/></svg><svg class="i18 m4"><use href="#t17"/></svg><svg class="i18 m2"><use href="#t18"/></svg><svg class="i18 m4"><use href="#t19"/></svg><svg class="i18 m2"><use href="#t20"/></svg><svg class="i18 m4"><use href="#t21"/></svg><svg class="c9 m2"><use href="#caret"/></svg>
    <svg class="i18 m2"><use href="#t22"/></svg><svg class="c9 m2"><use href="#caret"/></svg><svg class="i18 m4"><use href="#t23"/></svg><svg class="c9 m2"><use href="#caret"/></svg><svg class="i18 m2"><use href="#t24"/></svg><svg class="c9 m2"><use href="#caret"/></svg><i class="sep m6"></i>
    <svg class="c9 push"><use href="#caret"/></svg>
  </section>

  <main class="main">
    <aside class="side">
      <svg class="si"><use href="#s0"/></svg>
      <svg class="si g8"><use href="#s1"/></svg>
      <svg class="si"><use href="#s2"/></svg>
      <svg class="si"><use href="#s3"/></svg>
      <div class="si-act"><svg class="si"><use href="#s4"/></svg></div>
      <svg class="si"><use href="#s5"/></svg>
      <svg class="si"><use href="#s6"/></svg>
      <svg class="si"><use href="#s7"/></svg>
      <svg class="si g12"><use href="#s8"/></svg>
      <svg class="si g12"><use href="#s9"/></svg>
      <svg class="si g12"><use href="#s10"/></svg>
      <svg class="si"><use href="#s11"/></svg>
      <svg class="si"><use href="#s12"/></svg>
      <svg class="si"><use href="#s13"/></svg>
      <svg class="si"><use href="#s14"/></svg>
    </aside>

    <section class="panel">
      <div class="panel-head"><span>工序导航器 - 几何</span><i class="maxbtn"></i></div>
      <div class="tbl">
        <div class="row head"><div>名称</div><div>刀轨</div><div>余量</div><div>刀具</div><div>刀...</div><div>时间</div><div>几</div></div>
        <div class="tbody">
          <svg class="treelines" width="100" height="720"><path d="M10.500 42V345M30.500 96v10M30.500 288v10M30.500 384v10M49.500 98V228M49.500 290V324M49.500 386V516" fill="none" stroke="#999" stroke-dasharray="1 2"/><path d="M10.500 36H20M49.500 108h8M49.500 132h8M49.500 156h8M49.500 180h8M49.500 204h8M49.500 228h8M49.500 300h8M49.500 324h8M49.500 396h8M49.500 420h8M49.500 444h8M49.500 468h8M49.500 492h8M49.500 516h8" fill="none" stroke="#999" stroke-dasharray="1 2"/></svg>
          <div class="row"><div class="nm lv0">GEOMETRY</div><div></div><div></div><div></div><div></div><div>00:06:31</div><div></div></div>
          <div class="row"><div class="nm lv1"><i class="box hid"></i><svg class="ic"><use href="#folder"/></svg><span>未用项</span></div><div></div><div></div><div></div><div></div><div>00:00:00</div><div></div></div>
          <div class="row sel"><div class="nm lv1"><i class="box"></i><svg class="ic"><use href="#axis"/></svg><span>OP1</span></div><div></div><div></div><div></div><div></div><div>00:02:28</div><div></div></div>
          <div class="row"><div class="nm lv2"><i class="box"></i><svg class="ic"><use href="#wp"/></svg><span>WORKPIECE</span></div><div></div><div></div><div></div><div></div><div>00:02:28</div><div></div></div>
          <div class="row"><div class="nm lv3"><svg class="st14"><use href="#ban"/></svg><svg class="ic"><use href="#face"/></svg><span>FACE_MILLING</span></div><div class="ck"><svg class="st14"><use href="#ok"/></svg></div><div>0.00...</div><div>D100</div><div>1</div><div>00:00:07</div><div>W</div></div>
          <div class="row"><div class="nm lv3"><svg class="st14"><use href="#ban"/></svg><svg class="ic"><use href="#planar"/></svg><span>PLANAR_MILL</span></div><div class="ck"><svg class="st14"><use href="#ok"/></svg></div><div>0.20...</div><div>D8</div><div>2</div><div>00:00:56</div><div>W</div></div>
          <div class="row"><div class="nm lv3"><svg class="st14"><use href="#ban"/></svg><svg class="ic"><use href="#planar"/></svg><span>PLANAR_MILL_1</span></div><div class="ck"><svg class="st14"><use href="#ok"/></svg></div><div>0.00...</div><div>D8</div><div>2</div><div>00:00:07</div><div>W</div></div>
          <div class="row"><div class="nm lv3"><svg class="st14"><use href="#ok"/></svg><svg class="ic"><use href="#drill"/></svg><span>SPOT_DRILLING</span></div><div class="ck"><svg class="st14"><use href="#ok"/></svg></div><div></div><div>D6D...</div><div>3</div><div>00:00:02</div><div>W</div></div>
          <div class="row"><div class="nm lv3"><svg class="st14"><use href="#ok"/></svg><svg class="ic"><use href="#drill"/></svg><span>DRILLING</span></div><div class="ck"><svg class="st14"><use href="#ok"/></svg></div><div></div><div>D5.2...</div><div>4</div><div>00:00:04</div><div>W</div></div>
          <div class="row"><div class="nm lv3"><svg class="st14"><use href="#ban"/></svg><svg class="ic"><use href="#planar"/></svg><span>PLANAR_MILL_3</span></div><div class="ck"><svg class="st14"><use href="#ok"/></svg></div><div>-0.1...</div><div>D6D...</div><div>3</div><div>00:00:25</div><div>W</div></div>
          <div class="row"><div class="nm lv1"><i class="box"></i><svg class="ic"><use href="#axis"/></svg><span>OP2_JIAJU</span></div><div></div><div></div><div></div><div></div><div>00:01:10</div><div></div></div>
          <div class="row"><div class="nm lv2"><i class="box"></i><svg class="ic"><use href="#wp"/></svg><span>WORKPIECE_COPY</span></div><div></div><div></div><div></div><div></div><div>00:01:10</div><div></div></div>
          <div class="row"><div class="nm lv3"><svg class="st14"><use href="#ok"/></svg><svg class="ic"><use href="#planar"/></svg><span>PLANAR_MILL_1_COPY</span></div><div class="ck"><svg class="st14"><use href="#ok"/></svg></div><div>0.20...</div><div>D8</div><div>2</div><div>00:00:40</div><div>W</div></div>
          <div class="row"><div class="nm lv3"><svg class="st14"><use href="#ok"/></svg><svg class="ic"><use href="#planar"/></svg><span>PLANAR_MILL_1_COP...</span></div><div class="ck"><svg class="st14"><use href="#ok"/></svg></div><div>0.20...</div><div>D8</div><div>2</div><div>00:00:18</div><div>W</div></div>
          <div class="row"><div class="nm lv1"><i class="box"></i><svg class="ic"><use href="#axis"/></svg><span>OP2</span></div><div></div><div></div><div></div><div></div><div>00:02:53</div><div></div></div>
          <div class="row"><div class="nm lv2"><i class="box"></i><svg class="ic"><use href="#wp"/></svg><span>WORKPIECE_COPY_COPY</span></div><div></div><div></div><div></div><div></div><div>00:02:53</div><div></div></div>
          <div class="row"><div class="nm lv3"><svg class="st14"><use href="#ok"/></svg><svg class="ic"><use href="#face"/></svg><span>FACE_MILLING_1</span></div><div class="ck"><svg class="st14"><use href="#ok"/></svg></div><div>0.00...</div><div>D100</div><div>1</div><div>00:00:22</div><div>W</div></div>
          <div class="row"><div class="nm lv3"><svg class="st14"><use href="#ok"/></svg><svg class="ic"><use href="#face"/></svg><span>FACE_MILLING_2</span></div><div class="ck"><svg class="st14"><use href="#ok"/></svg></div><div>0.00...</div><div>D8</div><div>2</div><div>00:00:51</div><div>W</div></div>
          <div class="row"><div class="nm lv3"><svg class="st14"><use href="#ok"/></svg><svg class="ic"><use href="#face"/></svg><span>FACE_MILLING_2_COPY</span></div><div class="ck"><svg class="st14"><use href="#ok"/></svg></div><div>0.00...</div><div>D8</div><div>2</div><div>00:00:24</div><div>W</div></div>
          <div class="row"><div class="nm lv3"><svg class="st14"><use href="#ok"/></svg><svg class="ic"><use href="#drill"/></svg><span>SPOT_DRILLING_1</span></div><div class="ck"><svg class="st14"><use href="#ok"/></svg></div><div></div><div>D8</div><div>2</div><div>00:00:01</div><div>W</div></div>
          <div class="row"><div class="nm lv3"><svg class="st14"><use href="#ok"/></svg><svg class="ic"><use href="#planar"/></svg><span>PLANAR_MILL_2</span></div><div class="ck"><svg class="st14"><use href="#ok"/></svg></div><div>-0.1...</div><div>D6D...</div><div>3</div><div>00:00:11</div><div>W</div></div>
          <div class="row"><div class="nm lv3"><svg class="st14"><use href="#ok"/></svg><svg class="ic"><use href="#planar"/></svg><span>PLANAR_MILL_2_COPY</span></div><div class="ck"><svg class="st14"><use href="#ok"/></svg></div><div>-0.1...</div><div>D6D...</div><div>3</div><div>00:00:28</div><div>W</div></div>
          <div class="row"><div></div><div></div><div></div><div></div><div></div><div></div><div></div></div>
          <div class="row"><div></div><div></div><div></div><div></div><div></div><div></div><div></div></div>
          <div class="row"><div></div><div></div><div></div><div></div><div></div><div></div><div></div></div>
          <div class="row"><div></div><div></div><div></div><div></div><div></div><div></div><div></div></div>
          <div class="row"><div></div><div></div><div></div><div></div><div></div><div></div><div></div></div>
          <div class="row"><div></div><div></div><div></div><div></div><div></div><div></div><div></div></div>
          <div class="row"><div></div><div></div><div></div><div></div><div></div><div></div><div></div></div>
          <div class="row"><div></div><div></div><div></div><div></div><div></div><div></div><div></div></div>
          <i class="blackline"></i>
        </div>
        <div class="hscroll">
          <svg class="arrow"><path d="M9 2L4 8l5 6" fill="none" stroke="#444" stroke-width="2"/></svg>
          <i class="thumb"></i>
          <svg class="arrow right"><path d="M4 2l5 6-5 6" fill="none" stroke="#444" stroke-width="2"/></svg>
        </div>
      </div>
      <i class="strip"></i>
    </section>

    <section class="view">
      <div class="doctabs">
        <div class="doctab">
          <svg class="dtico"><rect x="4" y="0" width="4" height="13" fill="#2f50b8"/><path d="M8 2l8-1M8 5l7-1M8 8l6-1" stroke="#c0c8d8"/><path d="M2 15l4-3 4 3" fill="none" stroke="#f0d020" stroke-width="1.500"/></svg>
          <span class="dtname">GEO-S-20015-P4.prt</span>
          <svg class="dtmini"><path d="M1 1h6l3 3v8H1z" fill="#fff"/><rect x="3" y="5" width="5" height="5" fill="#55a0b9"/></svg>
          <svg class="dtx"><path d="M1 1l9 9M10 1l-9 9" stroke="#a5b7c0" stroke-width="2.200"/></svg>
        </div>
      </div>
      <div class="canvas">
        <svg class="part" viewBox="960 440 280 220">
          <path d="M1000 588l32 29 18 2 153-46 9-10-1-8-161 50-18-2-32-29z" fill="#8a8e99"/>
          <path d="M1121 475l27-4 12 9 33 5 8 5 10 68-8 9-153 46-18-2-32-29z" fill="#fff" stroke="#444" stroke-width=".8"/>
          <path d="M1032 611l18 2 153-46 8-9v7l-8 9-153 46-18-2-32-29v-5z" fill="#a9adb7" stroke="#555" stroke-width=".5"/>
          <path d="M1052 613v7M1145 586v7M1191 572v6" stroke="#555" stroke-width=".6"/>
          <ellipse cx="1180" cy="493" rx="10" ry="6" fill="#fff" stroke="#333" stroke-width=".7"/><path d="M1171 494c4-6 14-7 18-2 0 4-10 7-18 2z" fill="#8a8e99"/>
          <ellipse cx="1189" cy="558" rx="10" ry="6" fill="#fff" stroke="#333" stroke-width=".7"/><path d="M1180 559c4-6 14-7 18-2 0 4-10 7-18 2z" fill="#8a8e99"/>
          <ellipse cx="1046" cy="595" rx="10" ry="6" fill="#fff" stroke="#333" stroke-width=".7"/><path d="M1037 596c4-6 14-7 18-2 0 4-10 7-18 2z" fill="#8a8e99"/>
          <path d="M1100 482l38-4 4 10v10l-42 6z" fill="#8e929c" stroke="#333" stroke-width=".6"/><path d="M1100 482l38-4 4 10-42 6z" fill="#fff" stroke="#333" stroke-width=".6"/>
          <path d="M1100 560l43-7c7 0 8 12 8 12v12l-30 8-21-4z" fill="#8e929c" stroke="#333" stroke-width=".6"/><path d="M1100 560l43-7c7 0 8 12-5 18l-38 5z" fill="#fff" stroke="#333" stroke-width=".6"/>
          <path d="M1100 550l100-31" stroke="#e2a0a0" stroke-width="1.500"/><path d="M1200 519l-19 2 2 6z" fill="#e3a5a5"/>
          <text x="1182" y="517" class="lbl" fill="#d77c7c">XM</text>
          <path d="M1102 570l9 46" stroke="#1a3fc8" stroke-width="2"/><path d="M1113 635l-6-23 8-1z" fill="#0b36d8"/>
          <text x="1093" y="648" class="lbl" fill="#3c5cdc">ZM</text>
          <path d="M1118 583l8 13-7-2z" fill="#9fd99f"/>
          <text x="1107" y="610" class="lbl" fill="#5cae5c">YM</text>
        </svg>
        <div class="dialog">
          <div class="dlg-title">消息</div>
          <div class="dlg-body">
            <svg class="dlg-ic" viewBox="0 0 38 38"><circle cx="19" cy="19" r="18" fill="#c7cdd6" stroke="#8c96a5"/><circle cx="19" cy="19" r="15" fill="url(#gi)"/><circle cx="19" cy="10" r="2.500" fill="#eef"/><rect x="17" y="15" width="4" height="14" fill="#dde"/></svg>
            <span class="dlg-msg">Shopset.txt Fetch Error</span>
          </div>
          <div class="dlg-foot"><button class="dlg-btn"><span>确定(<u>O</u>)</span></button></div>
        </div>
        <svg class="triad" viewBox="0 0 100 70">
          <path d="M36 18l22-5 12 25-25 12z" fill="#cdced0" stroke="#aaa"/><path d="M36 18l9 32M40 32l29-7" stroke="#aaa" fill="none"/>
          <path d="M60 12L18 22l13-10 26-6z" fill="#2f9a35"/><text x="9" y="28" class="trl" fill="#2a9a3a">Y</text>
          <path d="M60 12l10 20-4 1-9-19z" fill="#d83232"/><text x="69" y="40" class="trl" fill="#d84444">X</text>
          <path d="M60 12l5 34" stroke="#a6b2d4" stroke-width="3"/><text x="63" y="57" class="trl" fill="#3f66e8">Z</text>
          <circle cx="60" cy="11" r="4" fill="#f2f2f2"/>
        </svg>
        <div class="slider"><i class="seg"></i></div>
      </div>
    </section>
  </main>

  <footer class="status"><svg class="i18 st-ic"><path d="M3 1H1v2M15 1h2v2M3 17H1v-2M15 17h2v-2" fill="none" stroke="#888"/><rect x="3" y="3" width="12" height="12" fill="#fff" stroke="#666" stroke-width="2"/><rect x="5" y="7" width="8" height="6" fill="#5b8ed8"/></svg></footer>
  <div class="taskbar"><i class="tb-a"></i><i class="tb-b"></i><span class="clock">13:17</span><i class="tb-l"></i></div>

  <div class="watermark">
    <svg class="wm-hex" viewBox="0 0 72 80"><path d="M36 0l35 20v40L36 80 1 60V20z" fill="#7cc4ee" opacity=".75"/><path d="M36 0l35 20-15 25L22 6z" fill="#fff" opacity=".35"/><path d="M1 20l20-10 14 22-16 26-18 2z" fill="#fff" opacity=".25"/><path d="M36 80L17 58l36 4 18-2z" fill="#7ed0fb"/><path d="M36 18l18 10v22L36 60 18 50V28z" fill="#e4e4e4"/><path d="M36 26l12 7v14l-12 7-12-7V33z" fill="#9ad0ef"/><path d="M36 40l12-7v14l-12 7z" fill="#78c0e8"/></svg>
    <div class="wm-text"><div class="wm-big">3D世界网</div><div class="wm-small">WWW.3DSJW.COM</div></div>
  </div>
</div>
</body>
</html>
```

FILE: styles.css
```css
* { box-sizing: border-box; }
html, body { margin: 0; padding: 0; }
body { font-family: "Noto Sans", "Noto Sans CJK SC", sans-serif; color: #222; background: #fff; overflow: hidden; }
.defs { position: absolute; width: 0; height: 0; }
.app { position: relative; width: 1920px; height: 1039px; overflow: hidden; display: flex; flex-direction: column; background: #fff; }
svg { flex: none; display: block; }
i { display: block; font-style: normal; }

.st { text-anchor: middle; font-family: "Liberation Sans", sans-serif; font-size: 7px; }
.b { font-weight: 700; }
.s5 { font-size: 5px; } .s6 { font-size: 6px; } .s7 { font-size: 7px; } .s8 { font-size: 8px; } .s9 { font-size: 9px; } .s11 { font-size: 13px; } .s12 { font-size: 11px; }
.n { font-family: "Liberation Sans Narrow", "Liberation Sans", sans-serif; }
.sa { font-size: 26px; font-family: "Liberation Serif", serif; font-weight: 700; }

.i18 { width: 18px; height: 18px; }
.c9 { width: 9px; height: 9px; }
.c11 { width: 13px; height: 13px; }
.sep { width: 1px; height: 26px; background: #d6d6d6; }
.m2 { margin-left: 2px; } .m4 { margin-left: 4px; } .m6 { margin-left: 6px; } .m8 { margin-left: 8px; }

/* title bar */
.titlebar { height: 30px; flex: none; display: flex; align-items: center; position: relative; }
.qat { display: flex; align-items: center; gap: 5px; }
.nx { width: 41px; margin-left: 4px; margin-right: -4px; font: 700 27px/30px "Liberation Sans", sans-serif; color: #7f94a8; letter-spacing: -1px; }
.first { margin-left: 3px; }
.qtxt { font-size: 14px; line-height: 20px; }
.qtxt.off { color: #b4b4b4; width: 56px; }
.apptitle { position: absolute; left: 1059px; top: 5px; font-size: 16px; line-height: 20px; white-space: nowrap; }
.winctl { margin-left: auto; display: flex; align-items: center; }
.siemens { font: 700 15.700px/20px "Liberation Sans", sans-serif; color: #009999; margin-right: 20px; letter-spacing: -.2px; }
.wbtn { width: 24px; height: 20px; margin-right: 7px; }
.wbtn.last { margin-right: 5px; }

/* tabs */
.tabs { height: 32px; flex: none; background: #dcdcdc; display: flex; align-items: stretch; font-size: 16px; }
.tab { padding: 0 13px; line-height: 32px; white-space: nowrap; }
.tab.file { width: 91px; padding: 0; text-align: center; background: #57a0bb; color: #fff; }
.tab.home { margin-left: 2px; }
.tab.active { background: #fff; color: #0a78a0; margin-top: 1px; line-height: 30px; padding: 0 14px 0 12px; margin-right: -1px; }
.tabs-right { margin-left: auto; display: flex; align-items: center; gap: 8px; padding-right: 9px; }
.search { width: 157px; height: 24px; background: #fff; border: 1px solid #aaa; display: flex; align-items: center; justify-content: space-between; padding: 0 2px; font-size: 14px; color: #aaa; margin-right: 3px; }
.mag { width: 18px; height: 18px; }
.tut { display: flex; align-items: center; font-size: 14px; gap: 2px; }

/* ribbon */
.ribbon { height: 105px; flex: none; padding: 5px 0 0 5px; border-bottom: 1px solid #dcdcdc; position: relative; }
.rib-top { display: flex; }
.gallery { width: 1092px; height: 78px; border: 1px solid #dcdcdc; display: grid; grid-template-columns: repeat(28, 39px); grid-auto-rows: 38px; }
.ri { display: flex; align-items: center; justify-content: center; }
.ri svg { width: 25px; height: 25px; margin-left: -2px; }
.rib-scroll { margin-left: 5px; height: 78px; padding-top: 8px; display: flex; flex-direction: column; gap: 16px; }
.contact { height: 22px; display: flex; align-items: center; font-size: 14px; color: #0a78a0; padding-left: 389px; position: relative; white-space: nowrap; letter-spacing: .12px; }
.mid-caret { position: absolute; left: 1097px; top: 7px; }
.end-caret { position: absolute; left: 1899px; top: 7px; }
.rib-vline { position: absolute; left: 1119px; top: 5px; width: 1px; height: 96px; background: #dcdcdc; }

/* toolbar */
.toolbar { height: 37px; flex: none; display: flex; align-items: center; gap: 4px; padding: 2px 6px 0 8px; border-bottom: 2px solid #8e9295; font-size: 14px; }
.menu { width: 51px; white-space: nowrap; }
.combo { height: 24px; border: 1px solid #aaa; display: flex; align-items: center; justify-content: space-between; padding: 0 5px 0 3px; color: #b0b0b0; font-size: 14px; }
.w1 { width: 166px; } .w2 { width: 176px; }
.push { margin-left: auto; }

/* main */
.main { flex: 1; display: flex; min-height: 0; }
.side { width: 33px; flex: none; background: #dcdcdc; border-right: 1px solid #a8a8a8; display: flex; flex-direction: column; align-items: center; padding-top: 0; gap: 12px; }
.si { width: 24px; height: 30px; margin-left: 1px; }
.side > .si:first-child { margin-top: -2px; }
.g8 { margin-top: 8px; }
.g12 { margin-top: 12px; }
.si-act { width: 31px; height: 46px; margin-left: 2px; margin-top: -8px; margin-bottom: -8px; background: #fff; border: 1px solid #bbb; border-right: 0; display: flex; align-items: center; justify-content: center; }
.si-act .si { margin-left: 0; }

.panel { width: 574px; flex: none; border-right: 1px solid #a8a8a8; display: flex; flex-direction: column; padding-left: 6px; }
.panel-head { height: 32px; flex: none; display: flex; align-items: center; justify-content: space-between; padding: 0 16px 2px 3px; font-size: 15px; }
.maxbtn { width: 14px; height: 12px; margin-top: 2px; border: 1px solid #111; border-top-width: 2px; }
.tbl { width: 557px; flex: none; border-left: 1px solid #dcdcdc; border-right: 1px solid #dcdcdc; border-top: 1px solid #dcdcdc; }
.row { display: grid; grid-template-columns: 270px 42px 55px 56px 39px 76px 17px; height: 24px; font-size: 15px; line-height: 23px; border-bottom: 1px solid #eee; background: #fff; white-space: nowrap; }
.row > div { padding-left: 5px; border-right: 1px solid #eee; overflow: hidden; }
.row > div:last-child { border-right: 0; padding-left: 4px; }
.row.head { background: #f4f4f4; border-bottom: 2px solid #dcdcdc; height: 25px; line-height: 22px; }
.row.head > div { border-right: 1px solid #dcdcdc; }
.row.head > div:first-child { padding-left: 6px; }
.tbody { position: relative; height: 712px; overflow: hidden; }
.tbody .row:nth-of-type(even) { background: #f9f9f9; }
.blackline { position: absolute; left: 269px; top: 0; width: 1px; height: 100%; background: #000; }
.treelines { position: absolute; left: 0; top: 0; }
.row > .nm { display: flex; align-items: center; position: relative; overflow: hidden; }
.row > .lv0 { padding-left: 3px; letter-spacing: .2px; }
.row > .lv1 { padding-left: 6px; }
.row > .lv2 { padding-left: 24px; }
.row > .lv3 { padding-left: 59px; }
.box { width: 11px; height: 11px; background: linear-gradient(#222, #222) center / 7px 1px no-repeat #fff; border: 1px solid #ccc; flex: none; position: relative; }
.box.hid { visibility: hidden; }
.ic { width: 16px; height: 16px; margin-left: 3px; }
.lv2 .ic { margin-left: 4px; width: 15px; height: 15px; }
.lv3 .ic { margin-left: 1px; }
.nm span { margin-left: 2px; letter-spacing: .2px; }
.lv2 span { margin-left: 3px; }
.st14 { width: 14px; height: 14px; }
.row > .ck { padding-left: 5px; display: flex; align-items: center; }
.row.sel > div { background: #8ac0d2; }
.row.sel > .nm { background: linear-gradient(90deg, #fff 35px, #8ac0d2 35px); }
.hscroll { height: 20px; margin-top: 1px; background: #efefef; display: flex; align-items: center; }
.arrow { width: 13px; height: 16px; margin-left: 3px; margin-right: 5px; }
.thumb { width: 359px; height: 20px; background: #c9c9c9; }
.arrow.right { margin-left: auto; margin-right: 5px; }
.strip { width: 559px; height: 5px; margin: 2px 0 0 -1px; border: 1px solid #aaa; background: #e4e4e4; }

.view { flex: 1; display: flex; flex-direction: column; min-width: 0; }
.doctabs { height: 26px; flex: none; border-bottom: 2px solid #57a0bb; background: #fff; }
.doctab { width: 212px; height: 26px; margin-left: -1px; padding-bottom: 2px; background: #57a0bb; color: #fff; display: flex; align-items: center; font-size: 16px; }
.dtico { width: 18px; height: 17px; margin-left: 7px; }
.dtname { margin-left: 2px; white-space: nowrap; width: 147px; }
.dtmini { width: 11px; height: 13px; margin-left: 8px; }
.dtx { width: 11px; height: 11px; margin-left: 4px; }
.canvas { flex: 1; position: relative; background: linear-gradient(#b5b6b8 0, #c6c7c9 220px, #dadcde 450px, #e5e6e8 630px, #e6e7e8 100%); }
.part { position: absolute; left: 353px; top: 210px; width: 280px; height: 220px; }
.lbl { font: 12px "Liberation Sans", sans-serif; }
.dialog { position: absolute; left: 192px; top: 219px; width: 322px; height: 132px; background: #efefef; border: 1px solid #aaa; border-top: 0; display: flex; flex-direction: column; }
.dlg-title { height: 33px; margin: 0 -1px; background: #55a0b9; color: #fff; font-size: 15px; line-height: 33px; padding-left: 9px; }
.dlg-body { flex: 1; display: flex; align-items: center; padding: 0 0 0 18px; }
.dlg-ic { width: 38px; height: 38px; }
.dlg-msg { margin-left: 23px; font-size: 15px; white-space: nowrap; color: #1c2430; letter-spacing: .28px; }
.dlg-foot { height: 38px; flex: none; display: flex; justify-content: center; }
.dlg-btn { width: 84px; height: 28px; margin-right: 3px; padding: 2px; border: 0; background: #73b2c9; color: #fff; font: 15px "Noto Sans", "Noto Sans CJK SC", sans-serif; }
.dlg-btn span { display: block; height: 24px; line-height: 22px; border: 1px dotted #111; }
.triad { position: absolute; left: 3px; top: 700px; width: 100px; height: 70px; }
.trl { font: 14px "Liberation Sans", sans-serif; }
.slider { position: absolute; right: 0; top: 464px; width: 13px; height: 74px; background: #4b4f5c; border-radius: 5px 0 0 5px; padding: 9px 2px 8px 5px; }
.seg { width: 6px; height: 100%; background: repeating-linear-gradient(#2c2e38 0 2px, #454853 2px 3px); position: relative; }
.seg::after { content: ""; position: absolute; left: 0; right: 0; bottom: 0; height: 20px; background: repeating-linear-gradient(#7fb070 0 2px, #3f9c8f 2px 3px); }

.status { height: 23px; flex: none; border-top: 2px solid #a8a8a8; display: flex; align-items: center; justify-content: flex-end; padding-right: 54px; }
.taskbar { height: 9px; flex: none; background: #d3d3d3; display: flex; position: relative; overflow: hidden; }
.tb-a { width: 428px; margin-left: 61px; background: #fff; }
.tb-b { width: 61px; margin-left: 125px; background: #e9e9e9; }
.clock { position: absolute; left: 1788px; top: 3px; font-size: 14px; line-height: 18px; color: #000; }
.tb-l { position: absolute; left: 1914px; top: 0; width: 1px; height: 9px; background: #888; }

.watermark { position: absolute; left: 1637px; top: 945px; display: flex; pointer-events: none; }
.wm-hex { width: 72px; height: 80px; }
.wm-text { margin-left: 8px; margin-top: 8px; color: rgba(255,255,255,.42); }
.wm-big { font: 700 42px/46px "Liberation Sans", "Noto Sans CJK SC", sans-serif; white-space: nowrap; }
.wm-small { font: 12px/12px "Liberation Sans", sans-serif; letter-spacing: 3px; margin-top: 1px; white-space: nowrap; }
```
